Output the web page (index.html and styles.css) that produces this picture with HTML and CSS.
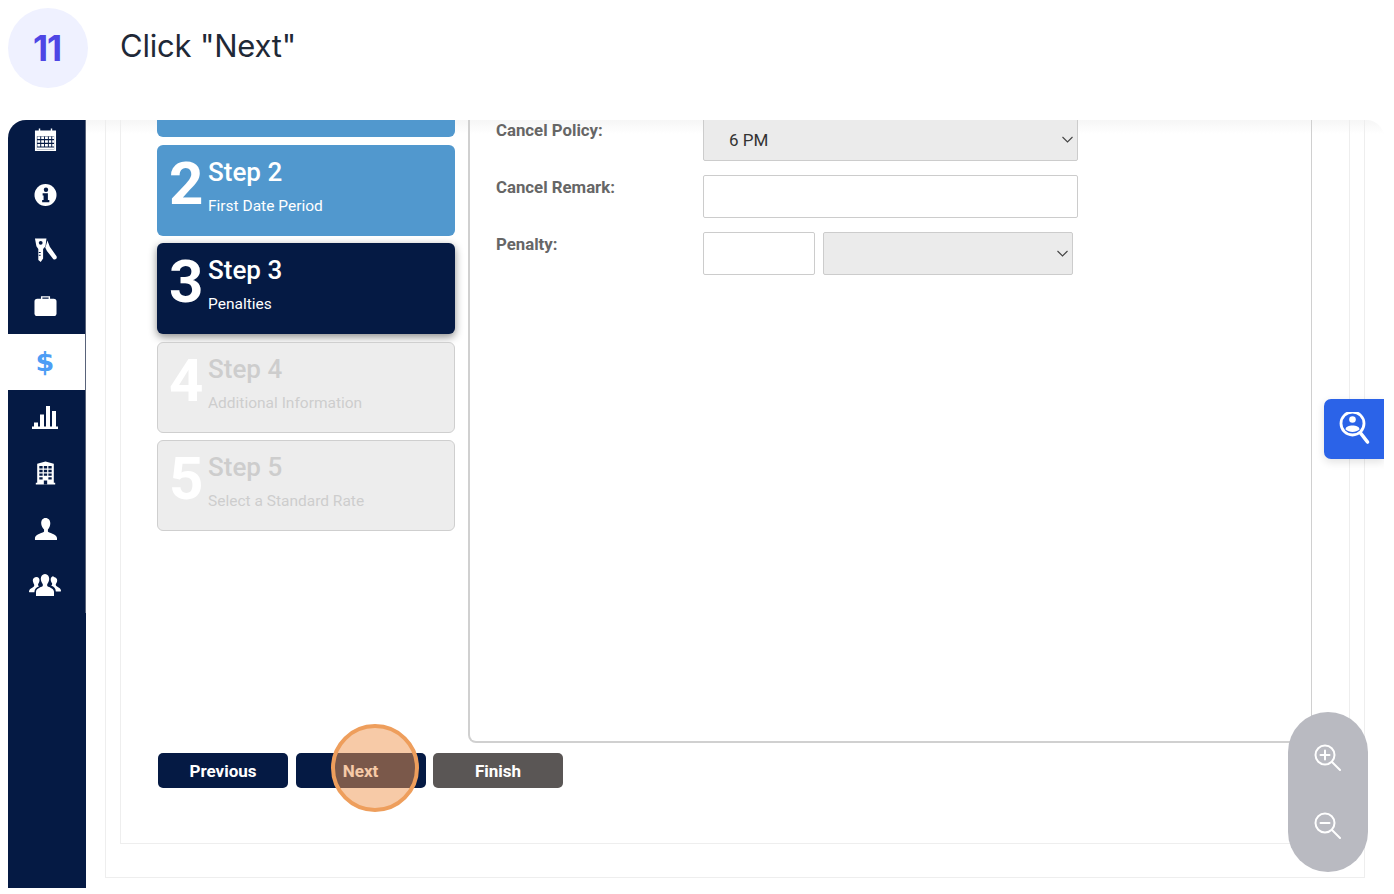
FILE: index.html
```html
<!DOCTYPE html>
<html lang="en">
<head>
<meta charset="utf-8">
<title>Click "Next"</title>
<link rel="stylesheet" href="styles.css">
</head>
<body>
<header class="head">
  <div class="badge">11</div>
  <h1 class="title">Click "Next"</h1>
</header>
<section class="frame">
  <nav class="side">
    <ul class="nav">
      <li class="nav-item"><svg class="ico" viewBox="0 0 24 24"><path fill="#fff" d="M1 3h4V1h1.500v2h11V1H19v2h4v22H1z"/><path fill="#051a44" d="M3 9h18v14H3z"/><path fill="#fff" d="M3.500 9.500h3v2.600h-3zM7.500 9.500h3v2.600h-3zM11.500 9.500h3v2.600h-3zM15.500 9.500h2.500v2.600h-2.500zM19 9.500h2v2.600h-2zM3.500 13.300h3v2.600h-3zM7.500 13.300h3v2.600h-3zM11.500 13.300h3v2.600h-3zM15.500 13.300h2.500v2.600h-2.500zM19 13.300h2v2.600h-2zM3.500 17.100h3v2.600h-3zM7.500 17.100h3v2.600h-3zM11.500 17.100h3v2.600h-3zM15.500 17.100h2.500v2.600h-2.500zM19 17.100h2v2.600h-2zM3 20.800h18V23H3z"/></svg></li>
      <li class="nav-item"><svg class="ico" viewBox="0 0 24 24"><circle cx="12" cy="12" r="11.500" fill="#fff"/><circle cx="12.500" cy="6.500" r="2.300" fill="#051a44"/><path fill="#051a44" d="M9 10.300h5.500v7h1.500v2.200H8.500v-2.200H10v-4.800H9z"/></svg></li>
      <li class="nav-item"><svg class="ico ico-keys" viewBox="0 0 24 26"><path fill="#fff" d="M1 1h12l-1 8-2.500 3v10l-2.500 3.500-2.500-2v-11.500L2.500 9z"/><circle cx="7" cy="5.500" r="2" fill="#051a44"/><path fill="#051a44" d="M5 15h2v1H5zM5 18h2v1H5z"/><path fill="#fff" d="M14 3l2.500 6.500 7 10c.6 1 .2 2.500-.5 3-1 .8-2.300.6-3-.2L13.500 14l-1.800-3.500.8-2z"/></svg></li>
      <li class="nav-item"><svg class="ico" viewBox="0 0 24 22"><path fill="none" stroke="#fff" stroke-width="1.500" d="M8 4V1.500h8V4"/><rect x=".5" y="3.500" width="23" height="18" rx="3" fill="#fff"/></svg></li>
      <li class="nav-item is-active"><span class="dollar">$</span></li>
      <li class="nav-item"><svg class="ico ico-wide" viewBox="0 0 26 23"><path fill="#fff" d="M0 20.500h26V23H0zM2 16.500h4v4H2zM8 8.500h4v12H8zM14 0h4v20.500h-4zM20 5h4v15.500h-4z"/></svg></li>
      <li class="nav-item"><svg class="ico" viewBox="0 0 24 26"><path fill="#fff" d="M3 3l9-2.500L21 3v20.500h1.500V25.500h-21v-2H3z"/><path fill="#051a44" d="M5.300 5.500h3.600v2.600H5.300zM10.200 5.500h3.600v2.600h-3.600zM15.100 5.500h3.600v2.600h-3.600zM5.300 9.500h3.600v2.600H5.300zM10.200 9.500h3.600v2.600h-3.600zM15.100 9.500h3.600v2.600h-3.600zM5.300 13.500h3.600v2.600H5.300zM10.200 13.500h3.600v2.600h-3.600zM15.100 13.500h3.600v2.600h-3.600zM5.300 17.500h3.600v2.600H5.300zM15.100 17.500h3.600v2.600h-3.600zM10.200 21h3.600v4.500h-3.600z"/></svg></li>
      <li class="nav-item"><svg class="ico" viewBox="0 0 24 23"><path fill="#fff" d="M12 0c3.200 0 5 2.500 5 5.500 0 2.500-1 5-2.500 6.500v2c0 1.500 9.500 2.500 9.500 7v2H1v-2c0-4.500 9.500-5.500 9.500-7v-2C9 10.500 7.500 8 7.500 5.500 7.500 2.500 9 0 12 0z"/></svg></li>
      <li class="nav-item"><svg class="ico ico-group" viewBox="0 0 32 22"><path fill="#fff" d="M16 0c2.700 0 4.200 2.200 4.200 4.800 0 2-1 4.200-2 5.400v1.600c0 1.200 6.800 2 6.800 6V22H7v-4.200c0-4 6.800-4.800 6.800-6v-1.600c-1-1.200-2-3.400-2-5.400C11.800 2.200 13.300 0 16 0z"/><path fill="#fff" d="M7.500 3c2 0 3 1.500 3 3.300 0 1.400-.6 2.800-1.400 3.800v1c0 .5.400.8 1 1.100-3 1.200-4.500 2.500-4.700 6H.3c-.5-.4-.3-1.500.2-2.200.9-1.600 4.700-2.800 4.700-4.200v-1C4.400 9 3.800 7.700 3.800 6.300 3.800 4.500 5.500 3 7.500 3zM24.500 3c2 0 3.700 1.500 3.700 3.300 0 1.400-.6 2.700-1.400 3.700v1c0 1.400 3.800 2.600 4.700 4.200.5.700.7 1.800.2 2.200h-4.900c-.2-3.500-1.700-4.800-4.700-6 .6-.3 1-.6 1-1.100v-1c-.8-1-1.400-2.400-1.400-3.800 0-1.800 1-3.300 2.800-3.500z"/></svg></li>
    </ul>
  </nav>
  <main class="outer">
    <div class="inner">
      <div class="wizard">
        <ol class="steps">
          <li class="step step-stub is-done"></li>
          <li class="step is-done"><span class="num">2</span><div class="step-text"><strong class="step-name">Step 2</strong><span class="step-sub">First Date Period</span></div></li>
          <li class="step is-current"><span class="num">3</span><div class="step-text"><strong class="step-name">Step 3</strong><span class="step-sub">Penalties</span></div></li>
          <li class="step is-off"><span class="num">4</span><div class="step-text"><strong class="step-name">Step 4</strong><span class="step-sub">Additional Information</span></div></li>
          <li class="step is-off"><span class="num">5</span><div class="step-text"><strong class="step-name">Step 5</strong><span class="step-sub">Select a Standard Rate</span></div></li>
        </ol>
        <form class="form">
          <label class="lbl">Cancel Policy:</label>
          <div class="ctl"><select class="sel sel-full"><option>6 PM</option></select></div>
          <label class="lbl">Cancel Remark:</label>
          <div class="ctl"><input class="inp inp-full" type="text"></div>
          <label class="lbl">Penalty:</label>
          <div class="ctl ctl-pair"><input class="inp inp-small" type="text"><select class="sel sel-small"><option></option></select></div>
        </form>
      </div>
      <div class="actions">
        <button class="btn" type="button">Previous</button>
        <button class="btn" type="button">Next</button>
        <button class="btn btn-grey" type="button">Finish</button>
      </div>
    </div>
  </main>
  <div class="spot"></div>
  <button class="search-tab" type="button" aria-label="Search">
    <svg viewBox="0 2 32 34" width="32" height="34"><circle cx="13.500" cy="13.500" r="11.500" fill="none" stroke="#fff" stroke-width="2.800"/><circle cx="13.500" cy="9.500" r="3.300" fill="#fff"/><path fill="#fff" d="M6.500 19.500c0-3 3.500-4 7-4s7 1 7 4c-1.800 1.600-4.300 2.500-7 2.500s-5.200-.9-7-2.500z"/><path d="M21.500 23l7 9" stroke="#fff" stroke-width="3.600" stroke-linecap="round"/></svg>
  </button>
  <div class="zoom-pill">
    <svg viewBox="0 0 28 28" width="28" height="28"><circle cx="12" cy="12" r="9.500" fill="none" stroke="#fff" stroke-width="2"/><path d="M19 19l8 8M12 7.500v9M7.500 12h9" stroke="#fff" stroke-width="2" stroke-linecap="round"/></svg>
    <svg viewBox="0 0 28 28" width="28" height="28"><circle cx="12" cy="12" r="9.500" fill="none" stroke="#fff" stroke-width="2"/><path d="M19 19l8 8M7.500 12h9" stroke="#fff" stroke-width="2" stroke-linecap="round"/></svg>
  </div>
</section>
</body>
</html>
```
FILE: styles.css
```css
* { box-sizing: border-box; }
html, body { margin: 0; padding: 0; background: #fff; overflow: hidden; }
body { width: 1394px; height: 894px; font-family: Roboto, "Liberation Sans", sans-serif; }

.head { height: 120px; padding: 8px; display: flex; align-items: flex-start; }
.badge { width: 80px; height: 80px; padding-right: 2px; border-radius: 50%; background: #eff1ff; color: #4f46e5; font: 700 35px/80px Inter, "Liberation Sans", sans-serif; letter-spacing: -1px; text-align: center; }
.title { margin: 17px 0 0 32px; font: 400 31px/42px Inter, "Liberation Sans", sans-serif; letter-spacing: -.2px; color: #1f2937; }

.frame { position: relative; width: 1376px; height: 768px; margin-left: 8px; display: flex; overflow: hidden; border-radius: 18px 18px 0 0; background: linear-gradient(#f6f6f6, #fff) top / 100% 14px no-repeat, #fff; }
.side { width: 78px; flex: none; background: #051a44; }
.nav { list-style: none; margin: -9px 0 0; padding: 0; }
.nav-item { height: 55.75px; width: 78px; padding-right: 3px; display: flex; align-items: center; justify-content: center; border-right: 1px solid #59637a; }
.nav-item.is-active { background: #fff; }
.ico { width: 23px; height: 24px; display: block; }
.ico-keys { height: 26px; }
.ico-wide { width: 26px; height: 23px; }
.ico-group { width: 32px; height: 22px; }
.dollar { font: 700 27px/1 "DejaVu Sans", sans-serif; color: #4d9df5; }

.outer { width: 1260px; margin: 0 0 10px 19px; padding: 0 14px 33px; border: solid #eeeeee; border-width: 0 1px 1px; }
.inner { height: 100%; padding: 0 37px 0 36px; border: solid #eeeeee; border-width: 0 1px 1px; }

.wizard { display: flex; height: 623px; }
.steps { list-style: none; margin: 0 12px 0 0; padding: 0; width: 299px; flex: none; display: flex; flex-direction: column; gap: 7.500px; }
.step { height: 91px; width: 298px; display: flex; border-radius: 6px; padding: 0 0 0 12px; overflow: hidden; }
.step-stub { height: 17px; border-radius: 0 0 6px 6px; }
.is-done { background: #5198ce; color: #fff; }
.is-current { background: #051a44; color: #fff; box-shadow: 0 3px 8px rgba(0,0,0,.45); overflow: visible; }
.is-off { background: #ededed; border: 1px solid #cfcfcf; color: #cdcdcd; padding-left: 11px; }
.num { width: 39px; flex: none; font: 700 60px/78px Roboto, sans-serif; color: #fff; }
.is-off .num { margin-top: -1px; }
.step-text { display: flex; flex-direction: column; }
.step-name { font: 500 26px/30px Roboto, sans-serif; margin-top: 12px; }
.step-sub { font: 400 15.500px/18px Roboto, sans-serif; margin-top: 10px; }
.is-off .step-name { margin-top: 11px; }

.form { flex: 1; margin: -2px 0 0; padding: 0 0 0 25px; border: solid #d0d0d0; border-width: 0 1px 2px 2px; border-radius: 0 0 0 8px; display: grid; grid-template-columns: 208px 375px; grid-auto-rows: 43px; row-gap: 14px; align-content: start; }
.lbl { font: 700 16.800px/22px Roboto, sans-serif; color: #666; margin-top: 1px; padding-left: 1px; }
.ctl { display: flex; gap: 8px; }
.sel, .inp { height: 43px; border: 1px solid #cccccc; border-radius: 2px; font: 400 17px Roboto, sans-serif; color: #333; margin: 0; }
.sel { appearance: none; padding-left: 25px; background: #ebebeb url("data:image/svg+xml,%3Csvg xmlns='http://www.w3.org/2000/svg' width='11' height='7'%3E%3Cpath d='M.5 1l5 5 5-5' fill='none' stroke='%23444' stroke-width='1.100'/%3E%3C/svg%3E") no-repeat right 4px center; }
.inp { background: #fff; }
.sel-full, .inp-full { width: 375px; }
.inp-small { width: 112px; }
.sel-small { width: 250px; }

.actions { display: flex; gap: 7.500px; margin: 10px 0 0 1px; }
.btn { width: 130px; height: 35px; border: 0; border-radius: 5px; background: #051a44; color: #fff; font: 700 17px Roboto, sans-serif; padding: 0; }
.btn-grey { background: #5a5655; }

.spot { position: absolute; left: 323px; top: 604px; width: 88px; height: 88px; border-radius: 50%; background: rgba(240,150,80,.5); border: 4px solid #ee9e5c; }
.search-tab { position: absolute; left: 1316px; top: 279px; width: 60px; height: 60px; border: 0; border-radius: 7px 0 0 7px; background: #2b63e8; box-shadow: 0 3px 8px rgba(0,0,0,.12); padding: 0 0 0 2px; display: flex; align-items: center; justify-content: center; }
.zoom-pill { position: absolute; left: 1280px; top: 592px; width: 80px; height: 160px; border-radius: 40px; background: #b9bac1; display: flex; flex-direction: column; align-items: center; justify-content: space-between; padding: 31px 2px 33px 0; }
```
